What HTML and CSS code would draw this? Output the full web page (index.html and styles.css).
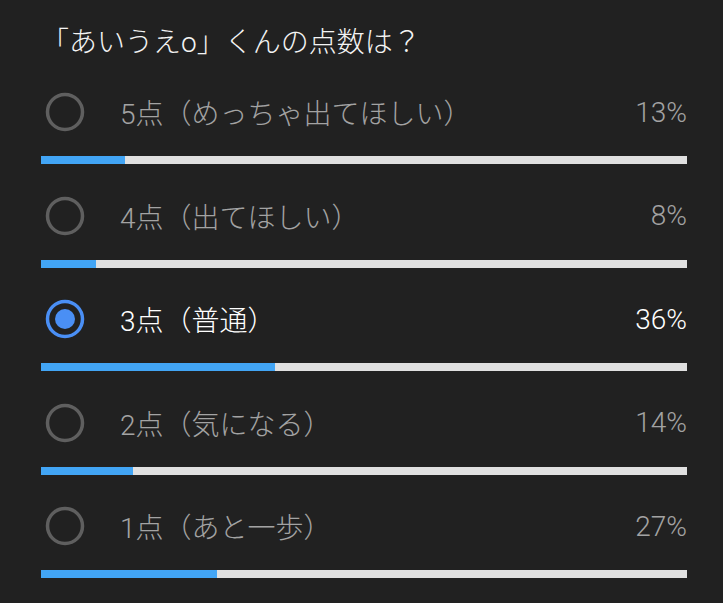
FILE: index.html
```html
<!DOCTYPE html>
<html lang="ja">
<head>
<meta charset="utf-8">
<link rel="stylesheet" href="styles.css">
</head>
<body>
<div class="poll">
  <div class="title">「あいうえo」くんの点数は？</div>
  <div class="options">
    <div class="option">
      <div class="line">
        <svg class="radio" viewBox="0 0 40 40"><circle cx="20" cy="20" r="17.5" class="ring"/></svg>
        <span class="label">5点（めっちゃ出てほしい）</span>
        <span class="pct">13%</span>
      </div>
      <div class="bar"><div class="fill" style="width:13%"></div></div>
    </div>
    <div class="option">
      <div class="line">
        <svg class="radio" viewBox="0 0 40 40"><circle cx="20" cy="20" r="17.5" class="ring"/></svg>
        <span class="label">4点（出てほしい）</span>
        <span class="pct">8%</span>
      </div>
      <div class="bar"><div class="fill" style="width:8.5%"></div></div>
    </div>
    <div class="option selected">
      <div class="line">
        <svg class="radio" viewBox="0 0 40 40"><circle cx="20" cy="20" r="17.5" class="ring"/><circle cx="20" cy="20" r="10" class="dot"/></svg>
        <span class="label">3点（普通）</span>
        <span class="pct">36%</span>
      </div>
      <div class="bar"><div class="fill" style="width:36.3%"></div></div>
    </div>
    <div class="option">
      <div class="line">
        <svg class="radio" viewBox="0 0 40 40"><circle cx="20" cy="20" r="17.5" class="ring"/></svg>
        <span class="label">2点（気になる）</span>
        <span class="pct">14%</span>
      </div>
      <div class="bar"><div class="fill" style="width:14.3%"></div></div>
    </div>
    <div class="option">
      <div class="line">
        <svg class="radio" viewBox="0 0 40 40"><circle cx="20" cy="20" r="17.5" class="ring"/></svg>
        <span class="label">1点（あと一歩）</span>
        <span class="pct">27%</span>
      </div>
      <div class="bar"><div class="fill" style="width:27.3%"></div></div>
    </div>
  </div>
</div>
</body>
</html>
```

FILE: styles.css
```css
html, body {
  margin: 0;
  padding: 0;
  background: #212121;
}
body {
  width: 723px;
  height: 603px;
  overflow: hidden;
  font-family: Roboto, "Noto Sans CJK JP", sans-serif;
  font-weight: 300;
}
.poll {
  padding: 24px 36px 0 41px;
}
.title {
  font-size: 28px;
  line-height: 38px;
  color: #f4f4f4;
  margin-left: 0;
}
.options {
  margin-top: 24px;
  display: flex;
  flex-direction: column;
}
.option {
  padding-bottom: 25.5px;
}
.line {
  height: 52px;
  display: flex;
  align-items: center;
}
.radio {
  width: 40px;
  height: 40px;
  margin-left: 4px;
  flex: none;
}
.ring {
  fill: none;
  stroke: #5f5f5f;
  stroke-width: 3.5;
}
.dot {
  fill: #4a8ff5;
}
.selected .ring {
  stroke: #4a8ff5;
}
.label {
  margin-left: 35px;
  font-size: 28px;
  color: #a3a3a3;
  flex: 1;
}
.pct {
  font-size: 28px;
  color: #a3a3a3;
}
.selected .label,
.selected .pct {
  color: #ffffff;
}
.bar {
  margin-top: 18px;
  height: 8px;
  background: #e0e0e0;
}
.fill {
  height: 100%;
  background: #42a5f5;
}
```
